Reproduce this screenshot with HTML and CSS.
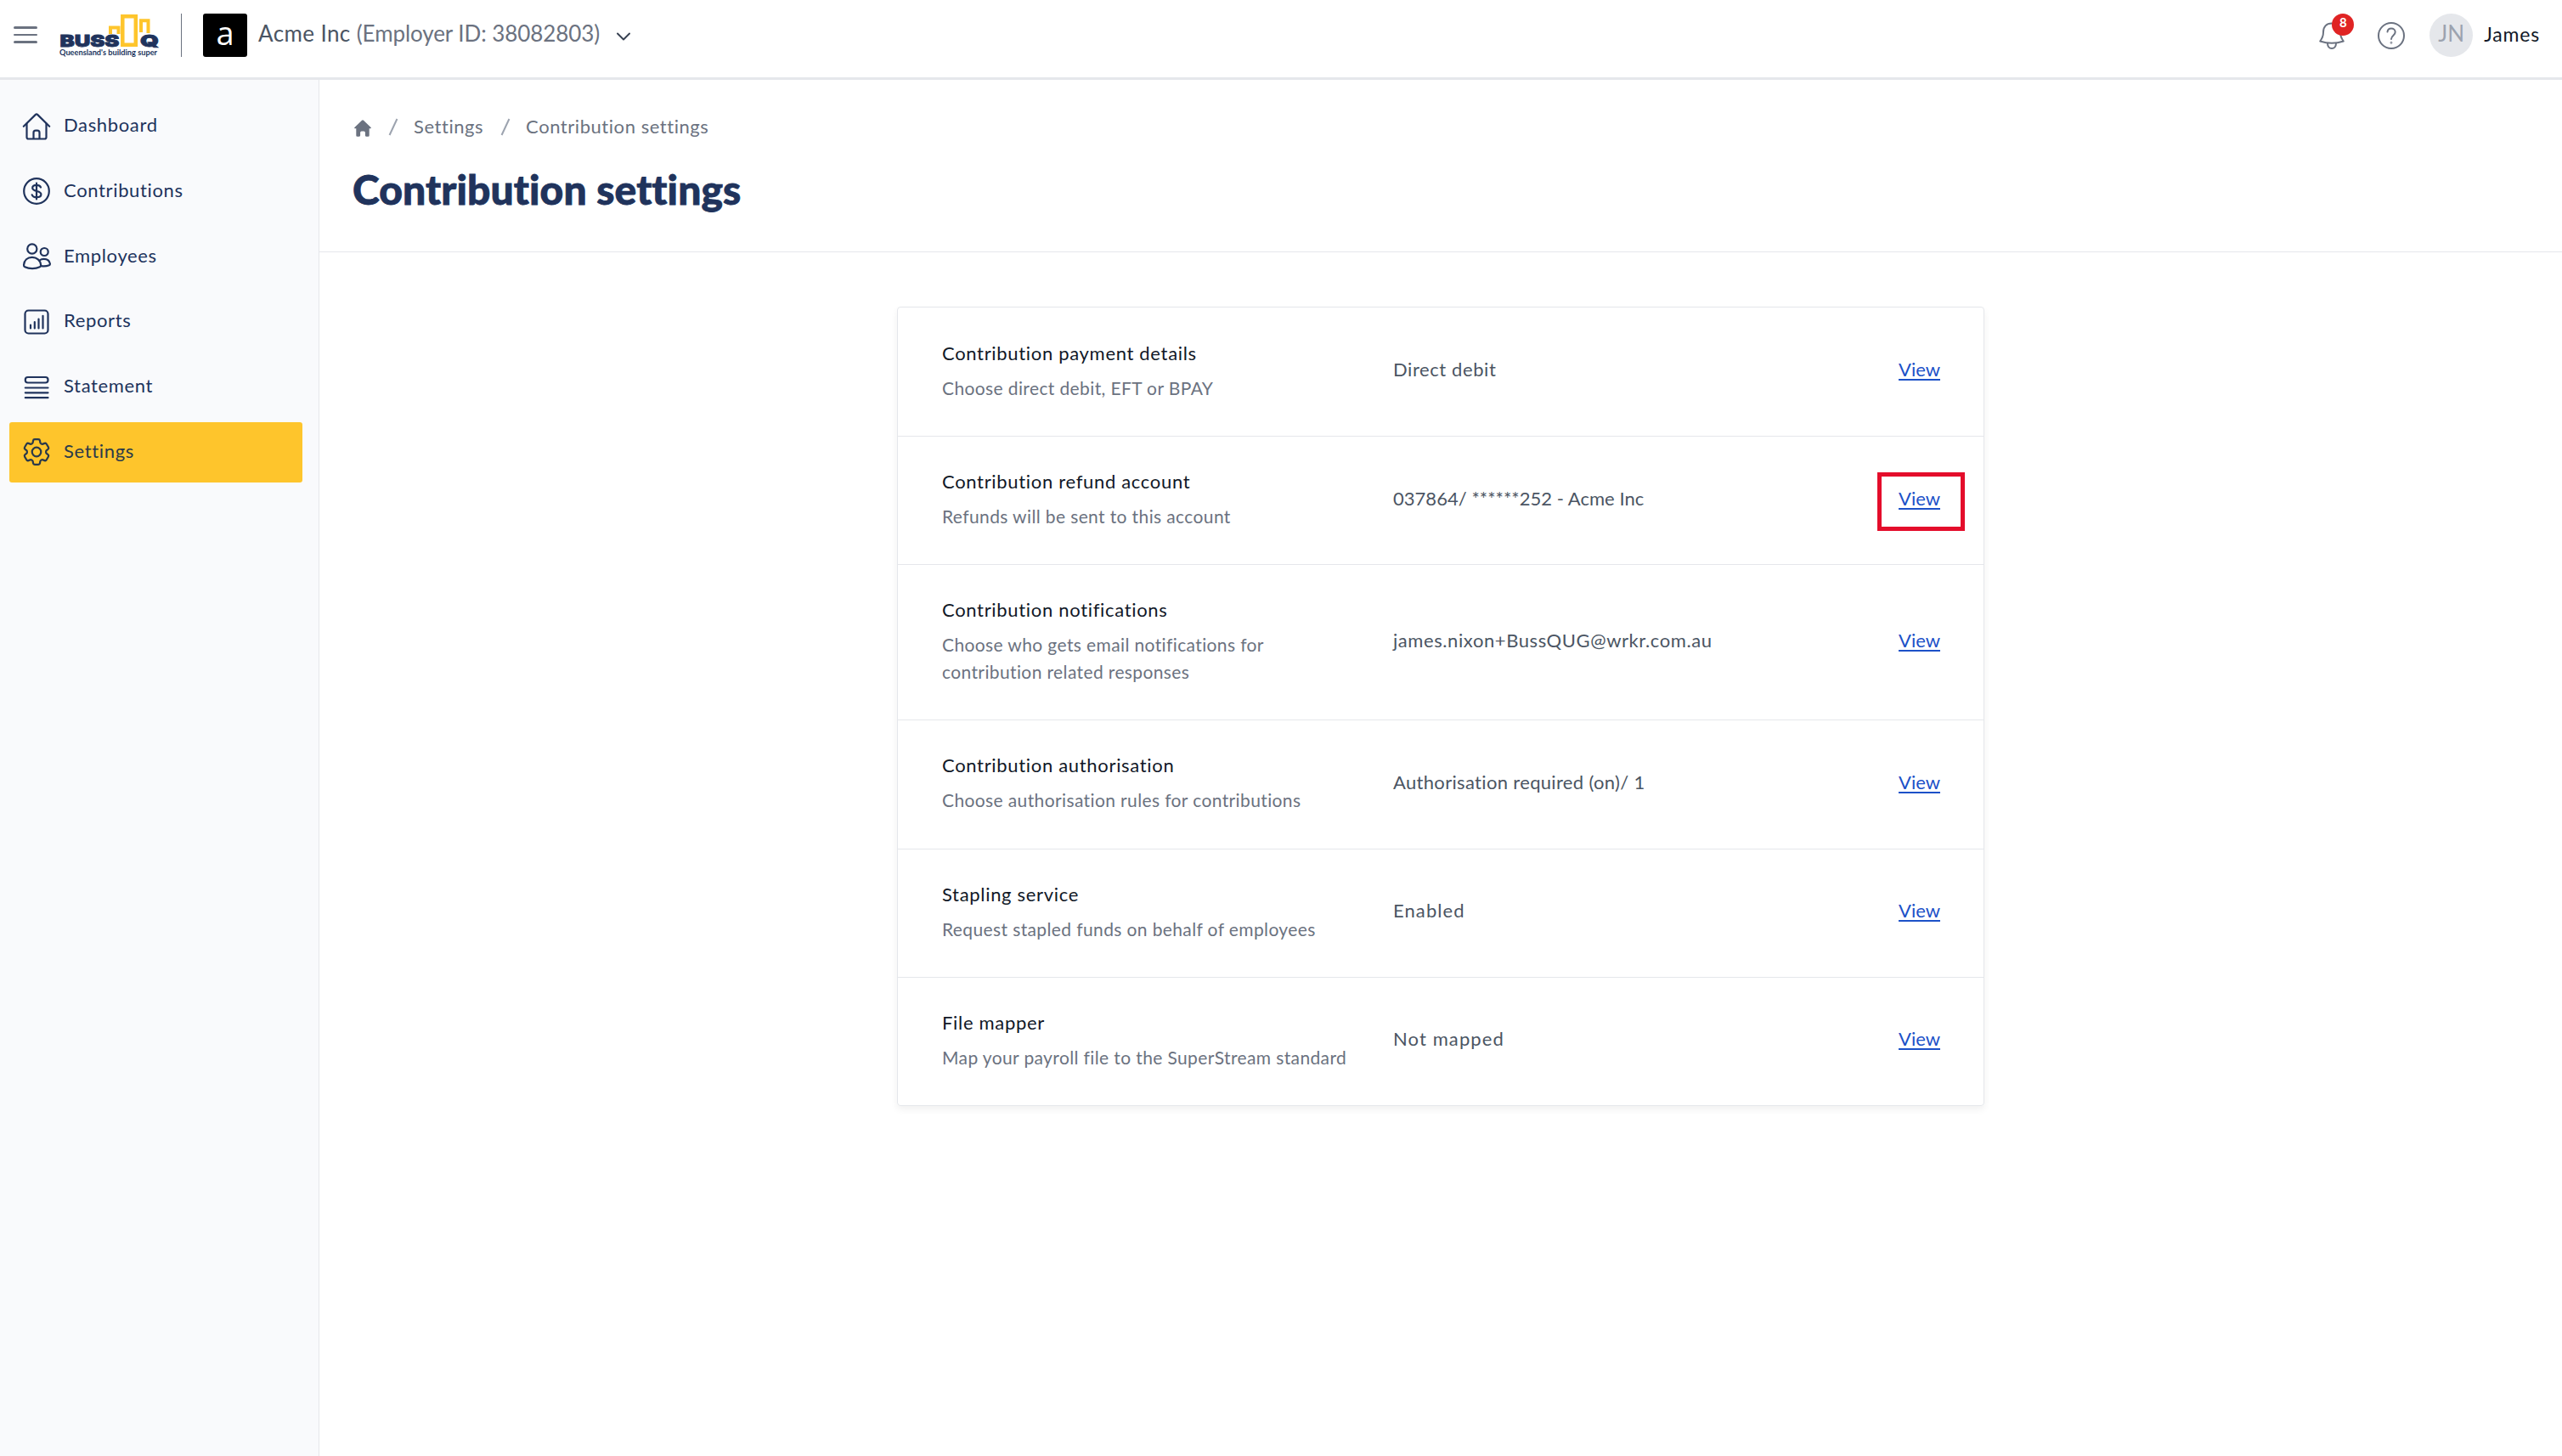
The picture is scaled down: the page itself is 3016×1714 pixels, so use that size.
FILE: index.html
```
<!DOCTYPE html>
<html lang="en">
<head>
    <meta charset="UTF-8">
    <title>Contribution settings</title>
    <meta name="viewport" content="width=device-width, initial-scale=1.0">
    <link rel="stylesheet" href="styles.css">
</head>
<body>
    <header class="topbar">
        <button class="menu-btn" aria-label="Menu">
            <span></span>
            <span></span>
            <span></span>
        </button>

        <svg class="logo" width="120" height="52" viewBox="0 0 120 52">
            <g fill="none" stroke="#fec52c">
                <path stroke-width="4" d="M60 24V16.5H69.5V24M60 15v9"/>
                <path stroke-width="4.5" d="M74.3 3.3H89.8V36.8H74.3Z"/>
                <path stroke-width="4" d="M96 22V8.3H104.5V23"/>
            </g>
            <g class="logo-word">
                <text x="0.5" y="39" textLength="70" lengthAdjust="spacingAndGlyphs">BUSS</text>
                <text x="95" y="39" textLength="22" lengthAdjust="spacingAndGlyphs">Q</text>
            </g>
            <text class="logo-tag" x="0" y="48.5" textLength="115" lengthAdjust="spacingAndGlyphs">Queensland's building super</text>
        </svg>

        <div class="divider"></div>

        <div class="company">
            <div class="company-logo">a</div>
            <p class="company-name">Acme Inc <span>(Employer ID: 38082803)</span></p>
            <svg class="chevron" width="18" height="12" viewBox="0 0 18 12" fill="none" stroke="#374151" stroke-width="2" stroke-linecap="round" stroke-linejoin="round">
                <path d="M2 2.5l7 7 7-7"/>
            </svg>
        </div>

        <div class="user-area">
            <div class="bell">
                <svg width="32" height="34" viewBox="0 0 32 34" fill="none" stroke="#6b7280" stroke-width="2" stroke-linecap="round" stroke-linejoin="round">
                    <path d="M16 2.5c-6.500 0-10 4.500-10 10.500C6 18 4.500 20.500 2.200 23.500c8.500 2.800 19.100 2.800 27.600 0C27.500 20.500 26 18 26 13c0-6-3.500-10.500-10-10.500z"/>
                    <path d="M11 26c0 3.500 2 6 5 6s5-2.500 5-6"/>
                </svg>
                <span class="badge">8</span>
            </div>
            <svg class="help" width="34" height="34" viewBox="0 0 34 34" fill="none" stroke="#6b7280" stroke-width="2" stroke-linecap="round">
                <circle cx="17" cy="17" r="15"/>
                <path d="M12.500 12.500c.3-2.500 2-4 4.500-4 2.700 0 4.700 1.700 4.700 4.200 0 4-4.700 4-4.700 8.300"/>
                <circle cx="17" cy="25.300" r=".4"/>
            </svg>
            <div class="avatar">JN</div>
            <span class="user-name">James</span>
        </div>
    </header>

    <div class="layout">
        <nav class="sidebar">
            <a class="nav-item">
                <svg class="icon" viewBox="0 0 32 32">
                    <path d="M.8 15.800L14.900 1.900q1.100-1 2.200 0L31.200 15.800"/>
                    <path d="M4.500 12.500V28.500a2 2 0 0 0 2 2h19a2 2 0 0 0 2-2V12.500"/>
                    <path d="M12.500 30V23.200a2.500 2.500 0 0 1 2.500-2.500h2a2.500 2.500 0 0 1 2.500 2.500V30"/>
                </svg>
                Dashboard
            </a>
            <a class="nav-item">
                <svg class="icon" viewBox="0 0 32 32">
                    <circle cx="16" cy="16" r="14.800"/>
                    <path d="M16 6.500v19M21 11.500c-.8-1.700-2.500-2.600-5-2.600-3 0-4.800 1.200-4.800 3.400 0 5 10.200 2.300 10.200 7.400 0 2.200-2.200 3.500-5.200 3.500-2.700 0-4.800-1-5.500-2.900"/>
                </svg>
                Contributions
            </a>
            <a class="nav-item">
                <svg class="icon" viewBox="0 0 32 32">
                    <circle cx="10.800" cy="7" r="5.600"/>
                    <circle cx="25.200" cy="10.500" r="4.500"/>
                    <path d="M1 25.800C1.500 20.500 5.300 16.900 10.800 16.900s9.800 3.600 10.300 8.900c.1 1.200-.3 2-1.300 2.500-5 2.500-12.500 2.500-17.500 0-1-.5-1.400-1.300-1.300-2.500z"/>
                    <path d="M19.500 20.500c1.500-1.200 3.300-1.700 5.200-1.700 4 0 6.700 2.500 7.200 5.700.1 1-.2 1.500-1 1.800-2.700 1-6 1.400-9.200.9"/>
                </svg>
                Employees
            </a>
            <a class="nav-item">
                <svg class="icon" viewBox="0 0 32 32">
                    <rect x="2.500" y="2.500" width="27" height="27" rx="4"/>
                    <path d="M9 19.500v4M13.800 16v7.500M18.500 12.500v11M23.500 8.800v14.700"/>
                </svg>
                Reports
            </a>
            <a class="nav-item">
                <svg class="icon" viewBox="0 0 32 32">
                    <rect x="2.800" y="4" width="26.700" height="6.500" rx="3"/>
                    <path d="M2.800 16.500h26.700M2.800 22.300h26.700M2.800 28.200h26.700"/>
                </svg>
                Statement
            </a>
            <a class="nav-item active">
                <svg class="icon gear" viewBox="2.300 2.300 19.400 19.400">
                    <path d="M9.594 3.94c.09-.542.56-.94 1.11-.94h2.593c.55 0 1.02.398 1.11.94l.213 1.281c.063.374.313.686.645.87.074.04.147.083.22.127.325.196.72.257 1.075.124l1.217-.456a1.125 1.125 0 0 1 1.37.49l1.296 2.247a1.125 1.125 0 0 1-.26 1.431l-1.003.827c-.293.241-.438.613-.43.992a7.723 7.723 0 0 1 0 .255c-.008.378.137.75.43.991l1.004.827c.424.35.534.955.26 1.43l-1.298 2.247a1.125 1.125 0 0 1-1.369.491l-1.217-.456c-.355-.133-.75-.072-1.076.124a6.47 6.47 0 0 1-.22.128c-.331.183-.581.495-.644.869l-.213 1.281c-.09.543-.56.94-1.11.94h-2.594c-.55 0-1.019-.398-1.11-.94l-.213-1.281c-.062-.374-.312-.686-.644-.87a6.52 6.52 0 0 1-.22-.127c-.325-.196-.72-.257-1.076-.124l-1.217.456a1.125 1.125 0 0 1-1.369-.49l-1.297-2.247a1.125 1.125 0 0 1 .26-1.431l1.004-.827c.292-.24.437-.613.43-.991a6.932 6.932 0 0 1 0-.255c.007-.38-.138-.751-.43-.992l-1.004-.827a1.125 1.125 0 0 1-.26-1.43l1.297-2.247a1.125 1.125 0 0 1 1.37-.491l1.216.456c.356.133.751.072 1.076-.124.072-.044.146-.086.22-.128.332-.183.582-.495.644-.869l.214-1.28Z"/>
                    <circle cx="12" cy="12" r="3.200"/>
                </svg>
                Settings
            </a>
        </nav>

        <main class="content">
            <div class="page-head">
                <div class="breadcrumb">
                    <svg width="20" height="20" viewBox="0 0 20 20" fill="#6b7280">
                        <path d="M9 .7q1-.9 2 0l8.600 8.300q.8.900-.3 1.200H17.700V18.500q0 1.200-1.200 1.200H14q-1.100 0-1.100-1.100V15q0-1.500-1.500-1.500H8.600q-1.500 0-1.500 1.500v3.600q0 1.100-1.100 1.100H3.500q-1.200 0-1.200-1.200V10.200H.7q-1.100-.3-.3-1.200z"/>
                    </svg>
                    <span class="slash"></span>
                    <a>Settings</a>
                    <span class="slash"></span>
                    <a>Contribution settings</a>
                </div>
                <h1>Contribution settings</h1>
            </div>

            <div class="card">
                <div class="row">
                    <div class="info">
                        <h2>Contribution payment details</h2>
                        <p>Choose direct debit, EFT or BPAY</p>
                    </div>
                    <div class="value">Direct debit</div>
                    <a class="view">View</a>
                </div>
                <div class="row">
                    <div class="info">
                        <h2>Contribution refund account</h2>
                        <p>Refunds will be sent to this account</p>
                    </div>
                    <div class="value account">037864/ ******252 - Acme Inc</div>
                    <a class="view highlight">View</a>
                </div>
                <div class="row">
                    <div class="info">
                        <h2>Contribution notifications</h2>
                        <p>Choose who gets email notifications for contribution related responses</p>
                    </div>
                    <div class="value">james.nixon+BussQUG@wrkr.com.au</div>
                    <a class="view">View</a>
                </div>
                <div class="row">
                    <div class="info">
                        <h2>Contribution authorisation</h2>
                        <p>Choose authorisation rules for contributions</p>
                    </div>
                    <div class="value rule">Authorisation required (on)/ 1</div>
                    <a class="view">View</a>
                </div>
                <div class="row">
                    <div class="info">
                        <h2>Stapling service</h2>
                        <p>Request stapled funds on behalf of employees</p>
                    </div>
                    <div class="value status">Enabled</div>
                    <a class="view">View</a>
                </div>
                <div class="row">
                    <div class="info">
                        <h2>File mapper</h2>
                        <p>Map your payroll file to the SuperStream standard</p>
                    </div>
                    <div class="value status">Not mapped</div>
                    <a class="view">View</a>
                </div>
            </div>
        </main>
    </div>
</body>
</html>
```
FILE: styles.css
```
/* Base styles */
* {
    box-sizing: border-box;
    margin: 0;
    padding: 0;
}

body {
    font-family: "Lato", "Open Sans", sans-serif;
    font-size: 22px;
    color: #111827;
    background-color: #fff;
    min-height: 100vh;
    display: flex;
    flex-direction: column;
}

svg {
    display: block;
    flex-shrink: 0;
    overflow: visible;
}

/* Top bar */
.topbar {
    display: flex;
    align-items: center;
    height: 94px;
    padding: 0 26px 11px 16px;
    border-bottom: 3px solid #e5e7eb;
}

.menu-btn {
    display: flex;
    flex-direction: column;
    gap: 6px;
    width: 28px;
    margin-right: 26px;
    padding-top: 2px;
    background: none;
    border: none;
}

.menu-btn span {
    height: 2.5px;
    border-radius: 2px;
    background-color: #6b7280;
}

.logo {
    margin-top: 4px;
}

.logo-word text {
    font-family: "Inter", sans-serif;
    font-size: 19px;
    font-weight: 900;
    fill: #20335c;
    stroke: #20335c;
    stroke-width: .8px;
}

.logo-tag {
    font-family: "Lato", sans-serif;
    font-size: 9.5px;
    font-weight: 700;
    fill: #20335c;
}

.divider {
    width: 1px;
    height: 51px;
    margin: 3px 25px 0 23px;
    background-color: #6b7280;
}

.company {
    display: flex;
    align-items: center;
}

.company-logo {
    width: 52px;
    height: 51px;
    margin: 3px 13px 0 0;
    border-radius: 3px;
    background-color: #000;
    color: #fff;
    font-family: "Open Sans", sans-serif;
    font-size: 38px;
    line-height: 44px;
    text-align: center;
}

.company-name {
    margin-top: -3px;
    font-size: 26px;
    letter-spacing: .4px;
    color: #4b5563;
}

.company-name span {
    color: #6b7280;
    letter-spacing: -.08px;
}

.chevron {
    margin: 5px 0 0 19px;
}

.user-area {
    display: flex;
    align-items: center;
    margin-left: auto;
    padding-top: 3px;
}

.bell {
    position: relative;
    margin-right: 37px;
}

.badge {
    position: absolute;
    top: -9px;
    left: 16px;
    width: 26px;
    height: 26px;
    border-radius: 50%;
    background-color: #e02424;
    color: #fff;
    font-size: 15px;
    font-weight: 700;
    line-height: 21px;
    text-align: center;
}

.help {
    margin-right: 28px;
}

.avatar {
    width: 51px;
    height: 51px;
    margin-right: 13px;
    border-radius: 50%;
    background-color: #e5e7eb;
    color: #9ca3af;
    font-size: 26px;
    line-height: 47px;
    text-align: center;
}

.user-name {
    margin-top: -3px;
    font-size: 23px;
    letter-spacing: .8px;
}

/* Layout */
.layout {
    display: flex;
    flex: 1;
}

.sidebar {
    display: flex;
    flex-direction: column;
    gap: 5.8px;
    width: 376px;
    padding: 19px 19px 0 11px;
    border-right: 1px solid #e5e7eb;
    background-color: #f9fafc;
}

.nav-item {
    display: flex;
    align-items: center;
    gap: 16px;
    height: 71px;
    padding: 0 16px 4px;
    border-radius: 3px;
    color: #20335c;
    letter-spacing: .65px;
}

.nav-item.active {
    background-color: #fec52c;
    color: #2b3a4a;
}

.icon {
    width: 32px;
    height: 32px;
    position: relative;
    top: 2px;
    fill: none;
    stroke: currentColor;
    stroke-width: 2.2;
    stroke-linecap: round;
    stroke-linejoin: round;
}

.gear {
    stroke-width: 1.35;
}

.content {
    flex: 1;
}

.page-head {
    height: 203px;
    padding: 39px 39px 0;
    border-bottom: 1px solid #e5e7eb;
}

.breadcrumb {
    display: flex;
    align-items: center;
    line-height: 32px;
    color: #6b7280;
    letter-spacing: .55px;
}

.breadcrumb svg {
    margin: 4px 0 0 2px;
}

.slash {
    width: 2px;
    height: 21px;
    margin: 0 23px 0 25px;
    background-color: #9ca3af;
    transform: rotate(25deg);
}

h1 {
    margin-top: 30px;
    font-size: 48px;
    font-weight: 900;
    line-height: 56px;
    letter-spacing: .1px;
    color: #20335c;
    -webkit-text-stroke: .8px #20335c;
}

/* Settings card */
.card {
    width: 1280px;
    margin: 64px auto 0;
    border: 1px solid #e5e7eb;
    border-radius: 4px;
    box-shadow: 0 4px 8px rgba(0, 0, 0, 0.06);
}

.row {
    display: grid;
    grid-template-columns: 487px 1fr auto;
    column-gap: 44px;
    align-items: center;
    min-height: 151.2px;
    padding: 35px 51px 40px 52px;
}

.row + .row {
    border-top: 1px solid #e5e7eb;
}

h2 {
    margin-bottom: 7px;
    font-size: 22px;
    font-weight: 400;
    line-height: 36px;
    letter-spacing: .68px;
}

.info p {
    font-size: 21px;
    line-height: 32px;
    letter-spacing: .38px;
    color: #6b7280;
}

.value,
.view {
    line-height: 32px;
}

.value {
    color: #4b5563;
    letter-spacing: .58px;
}

.value.account {
    letter-spacing: .03px;
}

.value.rule {
    letter-spacing: .33px;
}

.value.status {
    letter-spacing: 1.1px;
}

.view {
    position: relative;
    color: #1c51c8;
    text-decoration: underline;
    text-decoration-thickness: 2px;
    text-underline-offset: 3px;
}

.highlight::after {
    content: '';
    position: absolute;
    top: -15px;
    right: -29px;
    bottom: -22px;
    left: -25px;
    border: 5px solid #e40d2b;
}
```
